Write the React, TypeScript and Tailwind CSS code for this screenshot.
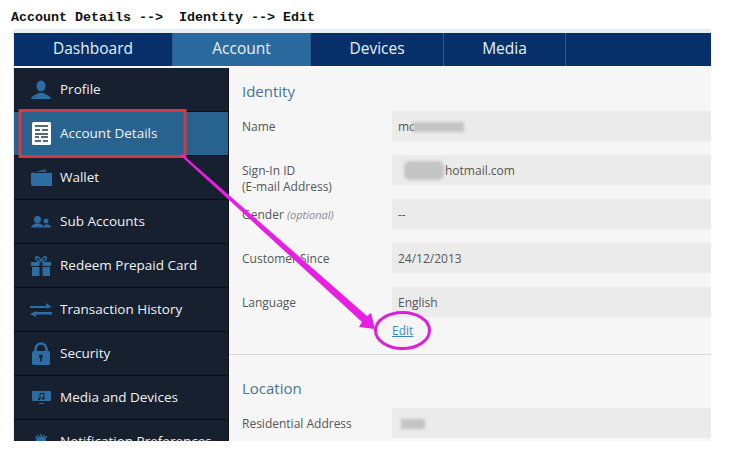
import React from 'react'

const ICON = '#2c6da3'

function ProfileIcon() {
  return (
    <svg width="22" height="20" viewBox="0 0 22 20">
      <ellipse cx="11" cy="6" rx="4.500" ry="5.500" fill={ICON} />
      <path d="M1 19c1-4 5-4 7-6h6c2 2 6 2 7 6z" fill={ICON} />
    </svg>
  )
}

function DetailsIcon() {
  return (
    <svg width="20" height="23" viewBox="0 0 20 23">
      <rect x="1" y="0" width="19" height="23" rx="1.500" fill="#fff" />
      <path d="M4 4h13M4 8h5M11 8h6M4 12h13M4 15h4M10 15h7M4 19h6M12 19h5" stroke="#1c3a55" strokeWidth="1.600" />
    </svg>
  )
}

function WalletIcon() {
  return (
    <svg width="21" height="17" viewBox="0 0 21 17">
      <path d="M1 4l13-4 2 3H1z" fill="#1f5c8d" />
      <path d="M0 4h21v13H2a2 2 0 0 1-2-2z" fill={ICON} />
    </svg>
  )
}

function SubAccountsIcon() {
  return (
    <svg width="20" height="12" viewBox="0 0 20 12">
      <circle cx="6.500" cy="3.500" r="3.500" fill={ICON} />
      <path d="M0 11.500c1-3 3-3 4-4h5c1 1 3 1 4 4z" fill={ICON} />
      <circle cx="15" cy="5" r="2.500" fill={ICON} />
      <path d="M13 11.500c0-2 .5-3 1-3h3c1 .5 3 1 3 3z" fill={ICON} />
    </svg>
  )
}

function GiftIcon() {
  return (
    <svg width="20" height="20" viewBox="0 0 20 20">
      <path d="M9 6C6 5 4 3 5 1c2-1 4 2 5 4 1-2 3-5 5-4 1 2-1 4-4 5" fill="none" stroke={ICON} strokeWidth="1.500" />
      <rect x="0" y="6" width="8.500" height="4" fill={ICON} />
      <rect x="11.500" y="6" width="8.500" height="4" fill={ICON} />
      <rect x="1" y="11" width="7.500" height="9" fill={ICON} />
      <rect x="11.500" y="11" width="7.500" height="9" fill={ICON} />
    </svg>
  )
}

function TransferIcon() {
  return (
    <svg width="22" height="14" viewBox="0 0 22 14">
      <path d="M0 3h16V0l6 4-6 1.500V5H0z" fill={ICON} />
      <path d="M22 9H6V8l-6 3 6 3v-2.500h16z" fill={ICON} />
    </svg>
  )
}

function LockIcon() {
  return (
    <svg width="20" height="23" viewBox="0 0 20 23">
      <path d="M4.500 10V7a5.500 5.500 0 0 1 11 0v3" fill="none" stroke={ICON} strokeWidth="2.500" />
      <rect x="1" y="9" width="18" height="14" rx="1.500" fill={ICON} />
      <circle cx="10" cy="14.500" r="2" fill="#16202f" />
      <rect x="9.200" y="15" width="1.600" height="4.500" fill="#16202f" />
    </svg>
  )
}

function MediaIcon() {
  return (
    <svg width="19" height="13" viewBox="0 0 19 13">
      <rect x="0" y="0" width="19" height="10" rx="1" fill={ICON} />
      <path d="M7 12.500h5" stroke={ICON} strokeWidth="1" />
      <path d="M8 2.500h4v5M8 2.500v5.500" fill="none" stroke="#16202f" strokeWidth="1" />
      <circle cx="7" cy="8" r="1.200" fill="#16202f" />
      <circle cx="11" cy="7.500" r="1.200" fill="#16202f" />
    </svg>
  )
}

function GearIcon() {
  return (
    <svg width="16" height="16" viewBox="0 0 16 16">
      <circle cx="8" cy="8" r="5.500" fill={ICON} />
      <path d="M8 0v16M0 8h16M2.300 2.300l11.400 11.400M13.700 2.300 2.300 13.700M4.500 .8l7 14.400M11.500 .8l-7 14.400" stroke={ICON} strokeWidth="1.400" />
    </svg>
  )
}

const sideItems = [
  { label: 'Profile', icon: <ProfileIcon /> },
  { label: 'Account Details', icon: <DetailsIcon />, active: true },
  { label: 'Wallet', icon: <WalletIcon /> },
  { label: 'Sub Accounts', icon: <SubAccountsIcon /> },
  { label: 'Redeem Prepaid Card', icon: <GiftIcon /> },
  { label: 'Transaction History', icon: <TransferIcon /> },
  { label: 'Security', icon: <LockIcon /> },
  { label: 'Media and Devices', icon: <MediaIcon /> },
  { label: 'Notification Preferences', icon: <GearIcon /> },
]

const tabs = [
  { label: 'Dashboard', width: 'w-[159px]' },
  { label: 'Account', width: 'w-[138px]', active: true },
  { label: 'Devices', width: 'w-[133px]' },
  { label: 'Media', width: 'w-[122px]' },
]

function Smudge({ className }: { className: string }) {
  return <span className={`inline-block bg-[#c4c4c4] blur-[1.5px] ${className}`} />
}

function Row({ label, children, rowClass = 'mb-[14px]' }: { label: React.ReactNode; children: React.ReactNode; rowClass?: string }) {
  return (
    <div className={`flex h-[30px] ${rowClass}`}>
      <div className="w-[163px] shrink-0 pl-[13px] pt-[8px] text-[12px] leading-[16px] text-[#555]">{label}</div>
      <div className="flex flex-1 items-center bg-[#ebebeb] pt-[1px] pl-[6px] text-[12px] text-[#555]">{children}</div>
    </div>
  )
}

export default function App() {
  return (
    <div className="relative h-[461px] w-[741px] overflow-hidden bg-white font-['Open_Sans',sans-serif]">
      <div className="h-[29px] pl-[11px] pt-[10px] font-['Liberation_Mono',monospace] text-[13.33px] font-bold leading-[16px] whitespace-pre text-[#111]">
        {'Account Details -->  Identity --> Edit'}
      </div>

      <div className="ml-[13px] w-[698px] border-t-4 border-l border-[#e6edf4] bg-[#f6f6f6]">
        <nav className="flex h-[33px] bg-[#07306b]">
          {tabs.map((tab) => (
            <div
              key={tab.label}
              className={`flex items-center justify-center border-r border-[#2d5c92] pb-[1px] text-[15.5px] text-[#e8f0f7] ${tab.width} ${tab.active ? 'bg-[#2a6a9e]' : ''}`}
            >
              {tab.label}
            </div>
          ))}
        </nav>

        <div className="mt-[2px] flex h-[373px] overflow-hidden">
          <aside className="w-[215px] shrink-0 border-r border-[#111] bg-[#16202f]">
            {sideItems.map((item) => (
              <div
                key={item.label}
                className={`flex h-[44px] items-center border-b border-[#080c14] text-[13.5px] text-[#eef2f6] ${item.active ? 'bg-[#28628f]' : ''}`}
              >
                <div className="flex w-[46px] shrink-0 justify-center pl-[8px]">{item.icon}</div>
                <span className="whitespace-nowrap">{item.label}</span>
              </div>
            ))}
          </aside>

          <main className="flex-1">
            <h2 className="ml-[13px] mt-[12px] h-[31px] text-[15px] leading-[22px] font-normal text-[#4a7394]">Identity</h2>
            <Row label="Name">
              <span>mc</span>
              <Smudge className="-ml-[2px] h-[10px] w-[51px]" />
            </Row>
            <Row
              label={
                <>
                  Sign-In ID
                  <br />
                  (E-mail Address)
                </>
              }
            >
              <Smudge className="mr-[1px] ml-[6px] h-[19px] w-[40px] rounded-md" />
              <span>hotmail.com</span>
            </Row>
            <Row
              label={
                <>
                  Gender <em className="text-[11px] text-[#888]">(optional)</em>
                </>
              }
            >
              --
            </Row>
            <Row label="Customer Since">24/12/2013</Row>
            <Row label="Language" rowClass="">
              English
            </Row>
            <div className="ml-[163px] mt-[7px] h-[30px] text-[12px] leading-[14px] text-[#3d86c6] underline">Edit</div>
            <div className="h-px bg-[#d9d9d9]" />
            <h2 className="ml-[13px] mt-[22px] h-[31px] text-[15px] leading-[22px] font-normal text-[#4a7394]">Location</h2>
            <Row label="Residential Address">
              <Smudge className="ml-[3px] h-[10px] w-[24px]" />
            </Row>
          </main>
        </div>
      </div>

      {/* annotations drawn on top of the screenshot */}
      <svg className="pointer-events-none absolute top-0 left-0" width="741" height="461" viewBox="0 0 741 461">
        <rect x="20" y="110.500" width="165" height="46" fill="none" stroke="#d8383f" strokeWidth="3" />
        <polygon points="180,155 182,154 367,316 371,313 375,329 359,327 362,322" fill="#e61fe0" />
        <ellipse cx="402.500" cy="330.500" rx="27" ry="18" fill="none" stroke="#dd1fd8" strokeWidth="3" />
      </svg>
    </div>
  )
}
